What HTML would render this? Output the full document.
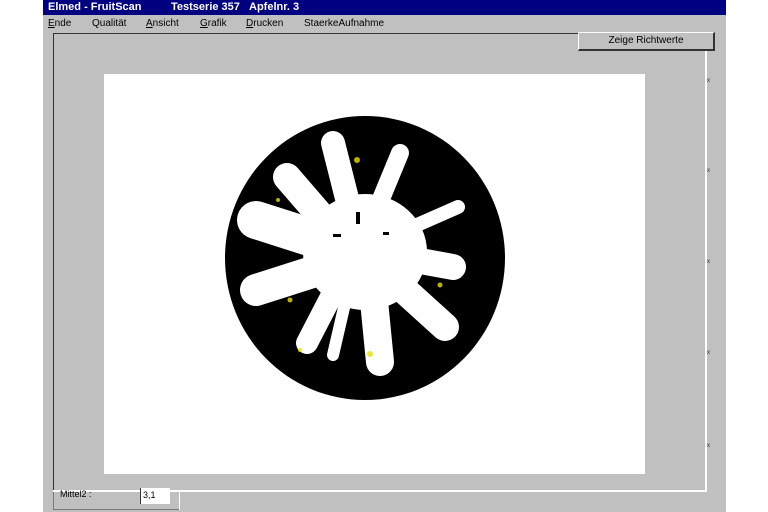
<!DOCTYPE html>
<html><head><style>
body{margin:0;width:768px;height:512px;background:#fff;position:relative;overflow:hidden;font-family:"Liberation Sans",sans-serif;}
.abs{position:absolute}
</style></head><body>
<div class="abs" style="left:43px;top:0;width:683px;height:512px;background:#c0c0c0"></div>
<div class="abs" style="left:43px;top:0;width:683px;height:15px;background:#000080;color:#fff;font-weight:bold;font-size:11px;line-height:15px">
 <span class="abs" style="left:5px">Elmed - FruitScan</span>
 <span class="abs" style="left:128px">Testserie 357</span>
 <span class="abs" style="left:206px">Apfelnr. 3</span>
</div>
<div class="abs" style="left:43px;top:15px;width:683px;height:17px;font-size:10px;line-height:17px;color:#000">
 <span class="abs" style="left:5px"><u>E</u>nde</span>
 <span class="abs" style="left:49px">Qualität</span>
 <span class="abs" style="left:103px"><u>A</u>nsicht</span>
 <span class="abs" style="left:157px"><u>G</u>rafik</span>
 <span class="abs" style="left:203px"><u>D</u>rucken</span>
 <span class="abs" style="left:261px">StaerkeAufnahme</span>
</div>
<div class="abs" style="left:53px;top:33px;width:525px;height:1px;background:#333"></div>
<div class="abs" style="left:53px;top:33px;width:1px;height:457px;background:#333"></div>
<div class="abs" style="left:705px;top:50px;width:2px;height:441px;background:#fff"></div>
<div class="abs" style="left:53px;top:490px;width:654px;height:2px;background:#fff"></div>
<div class="abs" style="left:578px;top:32px;width:134px;height:16px;background:#c0c0c0;border-top:1px solid #fff;border-left:1px solid #fff;border-right:2px solid #333;border-bottom:2px solid #333;font-size:10px;text-align:center;line-height:16px">Zeige Richtwerte</div>
<div class="abs" style="left:104px;top:74px;width:541px;height:400px;background:#fff"></div>
<svg class="abs" style="left:0;top:0" width="768" height="512">
<ellipse cx="365" cy="258" rx="140" ry="142" fill="#000"/>
<g stroke="#fff" stroke-linecap="round" fill="none">
<line x1="360" y1="250" x2="333" y2="143" stroke-width="24"/>
<line x1="360" y1="250" x2="400" y2="153" stroke-width="18"/>
<line x1="360" y1="250" x2="458" y2="207" stroke-width="14"/>
<line x1="360" y1="250" x2="453" y2="267" stroke-width="26"/>
<line x1="360" y1="250" x2="445" y2="327" stroke-width="28"/>
<line x1="370" y1="260" x2="380" y2="362" stroke-width="28"/>
<line x1="350" y1="260" x2="307" y2="343" stroke-width="22"/>
<line x1="350" y1="260" x2="256" y2="290" stroke-width="32"/>
<line x1="350" y1="250" x2="256" y2="220" stroke-width="38"/>
<line x1="350" y1="250" x2="287" y2="177" stroke-width="28"/>
<line x1="355" y1="260" x2="333" y2="355" stroke-width="12"/>
</g>
<ellipse cx="365" cy="252" rx="62" ry="58" fill="#fff"/>
<g fill="#e8e000" opacity="0.8">
<circle cx="357" cy="160" r="3"/><circle cx="290" cy="300" r="2.5"/><circle cx="370" cy="354" r="3"/><circle cx="300" cy="350" r="2"/><circle cx="440" cy="285" r="2.5"/><circle cx="278" cy="200" r="2"/>
</g>
<g fill="#000"><rect x="356" y="212" width="4" height="12"/><rect x="333" y="234" width="8" height="3"/><rect x="383" y="232" width="6" height="3"/></g>
</svg>
<div class="abs" style="left:707px;top:78px;font-size:6px;color:#333">x</div>
<div class="abs" style="left:707px;top:168px;font-size:6px;color:#333">x</div>
<div class="abs" style="left:707px;top:259px;font-size:6px;color:#333">x</div>
<div class="abs" style="left:707px;top:350px;font-size:6px;color:#333">x</div>
<div class="abs" style="left:707px;top:443px;font-size:6px;color:#333">x</div>
<div class="abs" style="left:53px;top:492px;width:1px;height:18px;background:#777"></div>
<div class="abs" style="left:53px;top:509px;width:127px;height:1px;background:#777"></div>
<div class="abs" style="left:179px;top:492px;width:1px;height:18px;background:#fff"></div>
<div class="abs" style="left:60px;top:489px;font-size:9px">Mittel2 :</div>
<div class="abs" style="left:140px;top:488px;width:30px;height:16px;background:#fff;border-left:1px solid #333;font-size:9px;line-height:14px;padding-left:2px;box-sizing:border-box">3,1</div>
</body></html>
